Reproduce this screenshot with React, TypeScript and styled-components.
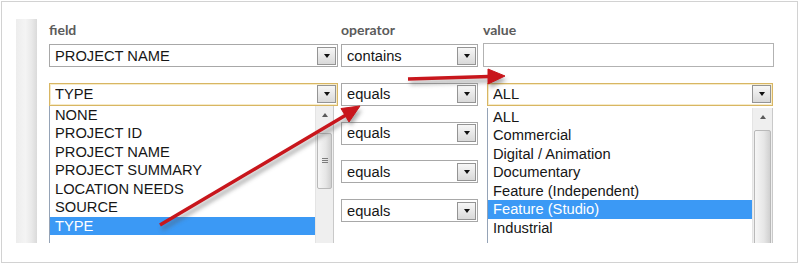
import styled, { createGlobalStyle } from "styled-components";

const GlobalStyle = createGlobalStyle`
  html, body {
    margin: 0;
    padding: 0;
    background: #fff;
  }
  body {
    font-family: "Liberation Sans", Arial, sans-serif;
  }
`;

const Frame = styled.div`
  position: relative;
  box-sizing: border-box;
  margin: 1px 0 0 1px;
  width: 797px;
  height: 262px;
  border: 1px solid #d2d2d2;
  padding: 17px 0 0 14px;
  overflow: hidden;
`;

const Panel = styled.div`
  display: flex;
  height: 224px;
  overflow: hidden;
`;

const Stripe = styled.div`
  width: 21px;
  flex-shrink: 0;
  background: linear-gradient(
    to right,
    #ededed 0,
    #f4f4f4 45%,
    #e9e9e9 75%,
    #dadada 100%
  );
`;

const Form = styled.div`
  margin-left: 12px;
  padding-top: 2px;
`;

const Row = styled.div`
  display: grid;
  grid-template-columns: 292px 142px 291px;
  height: 23px;
`;

const Header = styled(Row)`
  height: 17px;
`;

const Label = styled.span`
  font-family: Lato, "Open Sans", sans-serif;
  font-weight: 700;
  font-size: 14px;
  line-height: 17px;
  color: #5b5b5b;
`;

const Body = styled.div`
  display: flex;
  flex-direction: column;
  gap: 15.75px;
  margin-top: 6px;
`;

const Cell = styled.div`
  position: relative;
`;

const SelectBox = styled.div<{ $w: number; $focus?: boolean; $indent?: number }>`
  box-sizing: border-box;
  width: ${(p) => p.$w}px;
  height: 23px;
  margin-left: ${(p) => p.$indent ?? 0}px;
  display: flex;
  align-items: center;
  padding: 0 1px 0 5px;
  border: 1px solid ${(p) => (p.$focus ? "#d8b663" : "#a8a8a8")};
  box-shadow: ${(p) => (p.$focus ? "inset 0 0 0 1px #f6ebc9" : "none")};
  background: #fff;
  font-size: 14.7px;
  color: #161616;
`;

const SelectText = styled.span`
  flex: 1;
  white-space: nowrap;
  overflow: hidden;
`;

const DropButton = styled.span`
  box-sizing: border-box;
  width: 19px;
  height: 18px;
  display: flex;
  align-items: center;
  justify-content: center;
  border: 1px solid #949494;
  background: linear-gradient(#f7f7f7, #d9d9d9);

  &::after {
    content: "";
    border-left: 3.5px solid transparent;
    border-right: 3.5px solid transparent;
    border-top: 4px solid #111;
  }
`;

const TextInput = styled.div`
  box-sizing: border-box;
  width: 291px;
  height: 24px;
  margin-top: -1px;
  border: 1px solid #b2b2b2;
  background: #fff;
`;

const ListBox = styled.div<{ $w: number; $indent?: number; $top: number }>`
  position: absolute;
  top: ${(p) => p.$top}px;
  left: ${(p) => p.$indent ?? 0}px;
  z-index: 2;
  box-sizing: border-box;
  width: ${(p) => p.$w}px;
  height: 170px;
  display: flex;
  border-left: 1px solid #95a3b6;
  border-right: 1px solid #c9c9c9;
  background: #fff;
  font-size: 14.7px;
  color: #161616;
`;

const Items = styled.div`
  flex: 1;
`;

const Item = styled.div<{ $selected?: boolean }>`
  height: 18.5px;
  line-height: 18.5px;
  padding-left: 5px;
  white-space: nowrap;
  background: ${(p) => (p.$selected ? "#3b99f5" : "transparent")};
  color: ${(p) => (p.$selected ? "#fff" : "inherit")};
`;

const ScrollTrack = styled.div<{ $w: number }>`
  box-sizing: border-box;
  width: ${(p) => p.$w}px;
  flex-shrink: 0;
  padding: 0 1px;
  background: #efefef;
  border-left: 1px solid #e4e4e4;
`;

const ScrollArrow = styled.div`
  height: 19px;
  display: flex;
  align-items: center;
  justify-content: center;

  &::after {
    content: "";
    border-left: 3.5px solid transparent;
    border-right: 3.5px solid transparent;
    border-bottom: 4px solid #5a5a5a;
  }
`;

const ScrollThumb = styled.div<{ $top: number; $h: number }>`
  box-sizing: border-box;
  margin-top: ${(p) => p.$top}px;
  height: ${(p) => p.$h}px;
  display: flex;
  align-items: center;
  justify-content: center;
  border: 1px solid #b9b9b9;
  border-radius: 2px;
  background: linear-gradient(to right, #f6f6f6, #e6e6e6 60%, #d0d0d0);
`;

const Grip = styled.span`
  width: 6px;
  height: 5px;
  background: repeating-linear-gradient(#7c7c7c 0 1px, transparent 1px 2px);
`;

const Overlay = styled.svg`
  position: absolute;
  left: -2px;
  top: -2px;
  z-index: 5;
  pointer-events: none;
`;

const fields = [
  "NONE",
  "PROJECT ID",
  "PROJECT NAME",
  "PROJECT SUMMARY",
  "LOCATION NEEDS",
  "SOURCE",
  "TYPE",
];

const values = [
  "ALL",
  "Commercial",
  "Digital / Animation",
  "Documentary",
  "Feature (Independent)",
  "Feature (Studio)",
  "Industrial",
];

function Select({
  w,
  text,
  focus,
  indent,
}: {
  w: number;
  text: string;
  focus?: boolean;
  indent?: number;
}) {
  return (
    <SelectBox $w={w} $focus={focus} $indent={indent}>
      <SelectText>{text}</SelectText>
      <DropButton />
    </SelectBox>
  );
}

function List({
  w,
  top,
  items,
  selected,
  indent,
  bar,
  thumbTop,
  thumbH,
  grip,
}: {
  w: number;
  top: number;
  items: string[];
  selected: string;
  indent?: number;
  bar: number;
  thumbTop: number;
  thumbH: number;
  grip?: boolean;
}) {
  return (
    <ListBox $w={w} $indent={indent} $top={top}>
      <Items>
        {items.map((it) => (
          <Item key={it} $selected={it === selected}>
            {it}
          </Item>
        ))}
      </Items>
      <ScrollTrack $w={bar}>
        <ScrollArrow />
        <ScrollThumb $top={thumbTop} $h={thumbH}>
          {grip ? <Grip /> : null}
        </ScrollThumb>
      </ScrollTrack>
    </ListBox>
  );
}

function Arrows() {
  return (
    <Overlay width={800} height={264} viewBox="0 0 800 264">
      <defs>
        <filter id="soft" x="-20%" y="-20%" width="140%" height="140%">
          <feGaussianBlur stdDeviation="2" />
        </filter>
      </defs>
      <g transform="translate(2 4)" opacity="0.5" filter="url(#soft)">
        <line x1="160" y1="225" x2="346" y2="115" stroke="#555" strokeWidth="3.5" />
        <polygon points="360,106 349,122 341,108.5" fill="#555" />
        <line x1="408" y1="79" x2="489" y2="76.5" stroke="#555" strokeWidth="3.5" />
        <polygon points="505,76 488,69 488,84" fill="#555" />
      </g>
      <g fill="#c8161c" stroke="#c8161c">
        <line x1="160" y1="225" x2="346" y2="115" strokeWidth="3.5" />
        <polygon points="360,106 349,122 341,108.5" strokeWidth="1" />
        <line x1="408" y1="79" x2="489" y2="76.5" strokeWidth="3.5" />
        <polygon points="505,76 488,69 488,84" strokeWidth="1" />
      </g>
    </Overlay>
  );
}

export default function App() {
  return (
    <>
      <GlobalStyle />
      <Frame>
        <Panel>
          <Stripe />
          <Form>
            <Header>
              <Label>field</Label>
              <Label>operator</Label>
              <Label>value</Label>
            </Header>
            <Body>
              <Row>
                <Cell>
                  <Select w={289} text="PROJECT NAME" />
                </Cell>
                <Cell>
                  <Select w={137} text="contains" />
                </Cell>
                <Cell>
                  <TextInput />
                </Cell>
              </Row>
              <Row>
                <Cell>
                  <Select w={289} text="TYPE" focus />
                  <List
                    w={285}
                    top={23}
                    items={fields}
                    selected="TYPE"
                    bar={18}
                    thumbTop={8}
                    thumbH={56}
                    grip
                  />
                </Cell>
                <Cell>
                  <Select w={137} text="equals" />
                </Cell>
                <Cell>
                  <Select w={286} text="ALL" focus indent={4} />
                  <List
                    w={286}
                    top={25}
                    items={values}
                    selected="Feature (Studio)"
                    indent={4}
                    bar={20}
                    thumbTop={3}
                    thumbH={160}
                  />
                </Cell>
              </Row>
              {[0, 1, 2].map((i) => (
                <Row key={i}>
                  <Cell />
                  <Cell>
                    <Select w={137} text="equals" />
                  </Cell>
                  <Cell />
                </Row>
              ))}
            </Body>
          </Form>
        </Panel>
        <Arrows />
      </Frame>
    </>
  );
}
